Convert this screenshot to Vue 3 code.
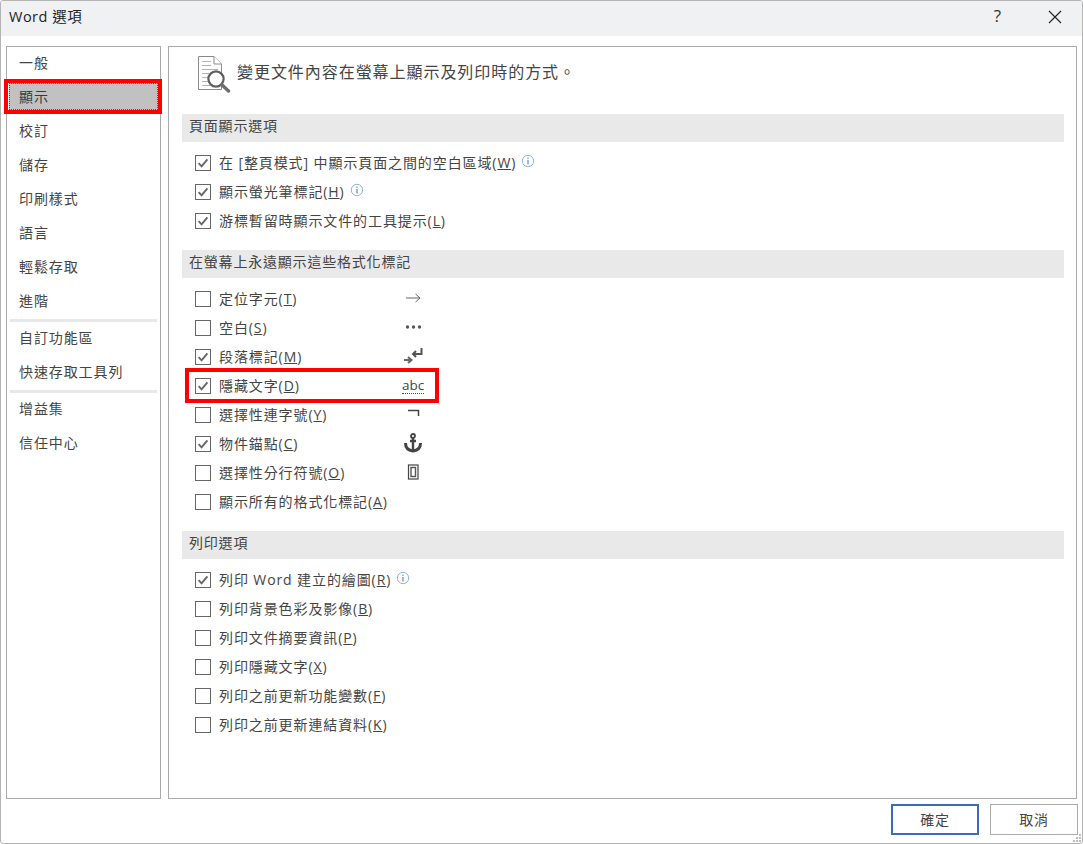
<script setup>
const navGroups = [
  ['一般', '顯示', '校訂', '儲存', '印刷樣式', '語言', '輕鬆存取', '進階'],
  ['自訂功能區', '快速存取工具列'],
  ['增益集', '信任中心'],
]
const sections = [
  {
    title: '頁面顯示選項',
    rows: [
      { text: '在 [整頁模式] 中顯示頁面之間的空白區域(', key: 'W', on: true, info: true },
      { text: '顯示螢光筆標記(', key: 'H', on: true, info: true },
      { text: '游標暫留時顯示文件的工具提示(', key: 'L', on: true },
    ],
  },
  {
    title: '在螢幕上永遠顯示這些格式化標記',
    rows: [
      { text: '定位字元(', key: 'T', on: false, sym: 'tab' },
      { text: '空白(', key: 'S', on: false, sym: 'dots' },
      { text: '段落標記(', key: 'M', on: true, sym: 'para' },
      { text: '隱藏文字(', key: 'D', on: true, sym: 'abc', mark: true },
      { text: '選擇性連字號(', key: 'Y', on: false, sym: 'hyphen' },
      { text: '物件錨點(', key: 'C', on: true, sym: 'anchor' },
      { text: '選擇性分行符號(', key: 'O', on: false, sym: 'break' },
      { text: '顯示所有的格式化標記(', key: 'A', on: false },
    ],
  },
  {
    title: '列印選項',
    rows: [
      { text: '列印 Word 建立的繪圖(', key: 'R', on: true, info: true },
      { text: '列印背景色彩及影像(', key: 'B', on: false },
      { text: '列印文件摘要資訊(', key: 'P', on: false },
      { text: '列印隱藏文字(', key: 'X', on: false },
      { text: '列印之前更新功能變數(', key: 'F', on: false },
      { text: '列印之前更新連結資料(', key: 'K', on: false },
    ],
  },
]
</script>

<template>
  <div class="window">
    <header class="titlebar">
      <span class="title">Word 選項</span>
      <span class="help">?</span>
      <svg class="close" width="14" height="14" viewBox="0 0 14 14">
        <path d="M1 1 L13 13 M13 1 L1 13" stroke="#222" stroke-width="1.1" fill="none" />
      </svg>
    </header>

    <div class="body">
      <nav class="nav">
        <template v-for="(group, g) in navGroups" :key="g">
          <div v-if="g" class="nav-sep"></div>
          <div
            v-for="item in group"
            :key="item"
            class="nav-item"
            :class="{ selected: item === '顯示' }"
          >
            <span class="nav-label">{{ item }}</span>
          </div>
        </template>
      </nav>

      <main class="panel">
        <div class="hero">
          <svg class="doc" width="36" height="38" viewBox="0 0 36 38">
            <path d="M1.5 1.5 H17 L24.5 9 V34.5 H1.5 Z" fill="#fff" stroke="#8a8a8a" />
            <path d="M17 1.5 V9 H24.5" fill="#fff" stroke="#8a8a8a" />
            <path d="M5 6.5 H14 M5 10.5 H14 M5 14.5 H21 M5 18.5 H12 M5 22.5 H11 M5 26.5 H11 M5 30.5 H13" stroke="#b4b4b4" fill="none" />
            <circle cx="19" cy="24" r="7.6" fill="#fff" stroke="#5f5f5f" stroke-width="2.2" />
            <path d="M24.8 29.8 L31.5 36" stroke="#6e6e6e" stroke-width="3.4" stroke-linecap="round" fill="none" />
          </svg>
          <span class="hero-text">變更文件內容在螢幕上顯示及列印時的方式。</span>
        </div>

        <section v-for="sec in sections" :key="sec.title" class="section">
          <h2 class="section-title">{{ sec.title }}</h2>
          <div class="rows">
            <div v-for="row in sec.rows" :key="row.key" class="row" :class="{ marked: row.mark }">
              <span class="box">
                <svg v-if="row.on" width="14" height="14" viewBox="0 0 14 14">
                  <path d="M2.6 7.2 L5.6 10.4 L11.4 3.4" stroke="#666" stroke-width="1.9" fill="none" />
                </svg>
              </span>
              <span class="label">{{ row.text }}<u>{{ row.key }}</u>)</span>
              <svg v-if="row.info" class="info" width="14" height="14" viewBox="0 0 14 14">
                <circle cx="7" cy="7" r="5.7" fill="none" stroke="#8db4e2" />
                <path d="M7 6 V10.5" stroke="#4d7fc0" stroke-width="1.1" fill="none" />
                <path d="M7 3.4 V4.7" stroke="#4d7fc0" stroke-width="1.1" fill="none" />
              </svg>
              <span v-if="row.sym" class="sym">
                <svg v-if="row.sym === 'tab'" width="22" height="12" viewBox="0 0 22 12">
                  <path d="M4 6 H18 M13.5 2 L18 6 L13.5 10" stroke="#666" fill="none" />
                </svg>
                <svg v-else-if="row.sym === 'dots'" width="22" height="12" viewBox="0 0 22 12">
                  <circle cx="5.5" cy="6" r="1.7" fill="#555" />
                  <circle cx="11.5" cy="6" r="1.7" fill="#555" />
                  <circle cx="17.5" cy="6" r="1.7" fill="#555" />
                </svg>
                <svg v-else-if="row.sym === 'para'" width="22" height="18" viewBox="0 0 22 18">
                  <path d="M19.5 1 V7 H11 M14 4 L11 7 L14 10" stroke="#555" stroke-width="2" fill="none" />
                  <path d="M2 13 H9 M6 10 L9.5 13 L6 16" stroke="#666" stroke-width="2" fill="none" />
                </svg>
                <span v-else-if="row.sym === 'abc'" class="abc">abc</span>
                <svg v-else-if="row.sym === 'hyphen'" width="22" height="12" viewBox="0 0 22 12">
                  <path d="M6 2.5 H16.5 V8" stroke="#444" stroke-width="1.5" fill="none" />
                </svg>
                <svg v-else-if="row.sym === 'anchor'" width="22" height="20" viewBox="0 0 22 20">
                  <circle cx="11" cy="3" r="2" fill="none" stroke="#444" stroke-width="1.8" />
                  <path d="M11 5 V17.5 M8 8 H14" stroke="#444" stroke-width="2.4" fill="none" />
                  <path d="M3.5 10 C3.5 15 7 17.5 11 18 C15 17.5 18.5 15 18.5 10" stroke="#444" stroke-width="3" fill="none" />
                </svg>
                <svg v-else-if="row.sym === 'break'" width="22" height="16" viewBox="0 0 22 16">
                  <rect x="6.5" y="1" width="9.5" height="14" fill="none" stroke="#444" stroke-width="1.2" />
                  <rect x="9" y="3.5" width="4.5" height="9" fill="none" stroke="#555" stroke-width="1.4" />
                </svg>
              </span>
            </div>
          </div>
        </section>
      </main>
    </div>

    <footer class="footer">
      <button class="btn primary">確定</button>
      <button class="btn">取消</button>
    </footer>
    <svg class="grip" width="10" height="10" viewBox="0 0 10 10">
      <path d="M7 1h2v2h-2z M4 4h2v2h-2z M7 4h2v2h-2z M1 7h2v2h-2z M4 7h2v2h-2z M7 7h2v2h-2z" fill="#bdbdbd" />
    </svg>
  </div>
</template>

<style>
html, body { margin: 0; background: #fff; }
</style>

<style scoped>
.window {
  position: relative;
  width: 1083px;
  height: 844px;
  box-sizing: border-box;
  border: 1px solid #b4b4b4;
  border-radius: 3px;
  display: flex;
  flex-direction: column;
  background: #fff;
  overflow: hidden;
  color: #444;
  font-family: "Open Sans", "Noto Sans CJK TC", sans-serif;
  font-size: 14px;
}
.titlebar {
  flex: none;
  height: 35px;
  box-sizing: border-box;
  padding-bottom: 6px;
  display: flex;
  align-items: center;
  background: #f0f1f3;
  color: #222;
}
.title {
  margin-left: 8px;
  font-size: 14.5px;
  letter-spacing: 0.5px;
}
.help {
  margin-left: auto;
  margin-right: 47px;
  font-size: 17px;
  color: #333;
}
.close {
  margin-right: 20px;
  margin-top: 2px;
}
.body {
  flex: none;
  height: 753px;
  margin-top: 10px;
  padding: 0 5px;
  display: flex;
  gap: 7px;
}
.nav {
  flex: none;
  width: 155px;
  box-sizing: border-box;
  border: 1px solid #ababab;
  padding: 0 2px;
}
.nav-item {
  height: 34px;
  display: flex;
  align-items: center;
  padding-left: 10px;
  letter-spacing: 0.9px;
}
.nav-item:first-child {
  margin-top: -1px;
}
.nav-item.selected {
  position: relative;
  background: #c1c1c1;
  color: #3a3a3a;
}
.nav-item.selected::before {
  content: "";
  position: absolute;
  left: 0;
  right: 0;
  top: 3px;
  bottom: 4px;
  border: 1px dotted #555;
}
.nav-item.selected::after {
  content: "";
  position: absolute;
  left: -5px;
  right: -4px;
  top: -1px;
  bottom: 0;
  border: 4px solid #f00;
}
.nav-label {
  position: relative;
  top: -1px;
}
.nav-sep {
  height: 3px;
  margin: 1px 1px -1px;
  background: #e8e8e8;
}
.panel {
  flex: 1;
  box-sizing: border-box;
  border: 1px solid #ababab;
  padding: 0 12px 0 13px;
}
.hero {
  height: 67px;
  display: flex;
  align-items: flex-start;
}
.doc {
  margin-left: 15px;
  margin-top: 8px;
}
.hero-text {
  margin-left: 4px;
  margin-top: 13px;
  font-size: 16px;
  line-height: 24px;
  letter-spacing: 0.95px;
}
.section {
  margin-bottom: 14px;
}
.section-title {
  margin: 0;
  height: 28px;
  padding-left: 7px;
  background: #e9e9e9;
  font-size: 14px;
  font-weight: 400;
  line-height: 24px;
  letter-spacing: 0.8px;
}
.rows {
  padding: 7px 0 0 13px;
}
.row {
  position: relative;
  height: 29px;
  display: flex;
  align-items: center;
  letter-spacing: 0.9px;
}
.row.marked::after {
  content: "";
  position: absolute;
  left: -10px;
  width: 254px;
  top: 0;
  height: 35px;
  margin-top: -4px;
  box-sizing: border-box;
  border: 4px solid #f00;
}
.box {
  flex: none;
  width: 16px;
  height: 16px;
  margin-top: -1px;
  box-sizing: border-box;
  border: 1px solid #666;
  display: flex;
  align-items: center;
  justify-content: center;
  background: #fff;
}
.label {
  margin-left: 8px;
  margin-bottom: 3px;
}
.label u {
  text-underline-offset: 1px;
}
.info {
  margin-left: 5px;
  margin-top: -5px;
}
.sym {
  position: absolute;
  left: 205px;
  top: -2px;
  width: 26px;
  height: 29px;
  display: flex;
  align-items: center;
  justify-content: center;
}
.abc {
  margin-top: 2px;
  font-size: 13.5px;
  letter-spacing: 0;
  line-height: 15px;
  border-bottom: 1px dotted #444;
}
.footer {
  flex: 1;
  display: flex;
  align-items: flex-start;
  justify-content: flex-end;
  gap: 11px;
  padding: 5px 4px 0 0;
}
.btn {
  width: 88px;
  height: 31px;
  box-sizing: border-box;
  border: 1px solid #ababab;
  background: #fff;
  color: #444;
  font: inherit;
  letter-spacing: 0.7px;
  padding: 0 0 2px;
}
.btn.primary {
  border: 2px solid #3b6db5;
}
.grip {
  position: absolute;
  right: 0;
  bottom: 0;
}
</style>
